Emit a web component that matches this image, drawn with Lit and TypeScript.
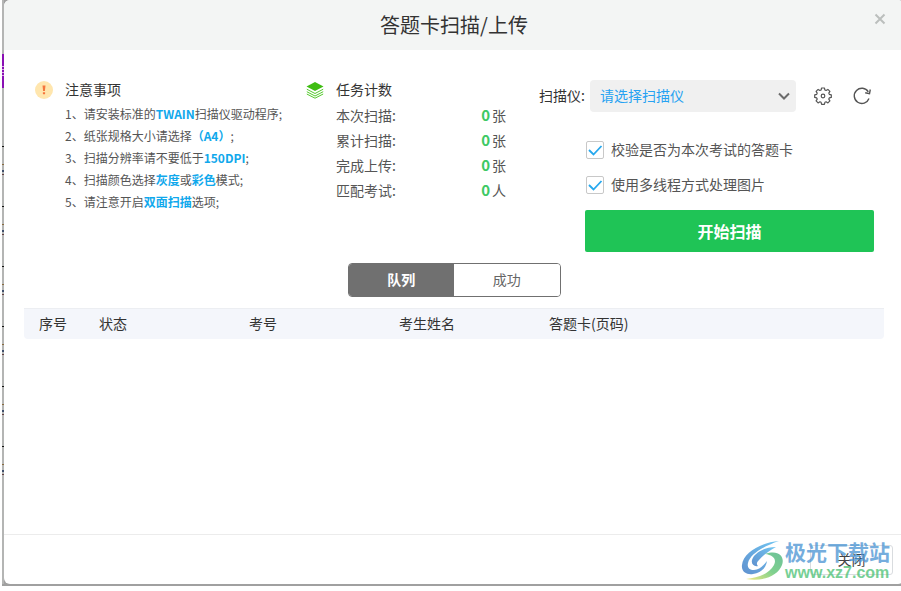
import { LitElement, html, css } from "lit";
import { customElement, state } from "lit/decorators.js";

@customElement("app-root")
export class AppRoot extends LitElement {
  @state() private tab = "queue";

  private counts = [
    { label: "本次扫描", value: 0, unit: "张" },
    { label: "累计扫描", value: 0, unit: "张" },
    { label: "完成上传", value: 0, unit: "张" },
    { label: "匹配考试", value: 0, unit: "人" },
  ];

  private options = ["校验是否为本次考试的答题卡", "使用多线程方式处理图片"];

  static styles = css`
    :host {
      display: block;
      position: relative;
      overflow: hidden;
      box-sizing: border-box;
      min-height: 100vh;
      background: #fff;
      color: #333;
      font: 14px/20px "Noto Sans CJK SC", sans-serif;
    }
    * { box-sizing: border-box; }
    button, input, select { font: inherit; color: inherit; margin: 0; padding: 0; }
    svg { display: block; fill: none; }
    .backdrop {
      display: flex;
      min-height: calc(100vh - 5px);
      padding: 0 0 2px 2px;
      margin-bottom: 5px;
      background: linear-gradient(90deg, #fff 2px, #a0a0a0 2px);
      margin-right: -3px;
    }
    .edge { flex: 0 0 2px; background: #b4b5b4; display: flex; flex-direction: column; }
    .edge-tag { margin-top: 54px; height: 34px; background: #8a10b4; flex: none; padding-top: 12px; }
    .edge-tag i { display: block; height: 12px; background: repeating-linear-gradient(#d9a6e8 0 1px, #8a10b4 1px 3px); }
    .edge-rows { margin-top: 58px; height: 360px; flex: none; background: repeating-linear-gradient(#111 0 1px, #b4b5b4 1px 18px, #8a6a3c 18px 19px, #b4b5b4 19px 24px, #40506c 24px 26px, #b4b5b4 26px 28px, #664040 28px 29px, #b4b5b4 29px 60px); }
    .dialog {
      flex: 1;
      min-width: 0;
      display: flex;
      flex-direction: column;
      background: #fff;
      border-radius: 6px;
      overflow: hidden;
    }
    header {
      display: grid;
      grid-template-columns: 1fr auto 1fr;
      align-items: center;
      height: 50px;
      padding: 0 16px;
      background: #f3f5f4;
    }
    h1 { grid-column: 2; margin: 0; font-size: 20px; line-height: 30px; font-weight: 400; }
    .close-x { justify-self: end; width: 16px; height: 16px; margin-bottom: 12px; border: 0; background: none; stroke: #bbbfbd; stroke-width: 2; }
    main { flex: 1; }
    .top {
      display: grid;
      grid-template-columns: 271fr 233fr 335fr;
      padding: 28px 30px 0 31px;
      min-height: 202px;
    }
    .panel { display: grid; grid-template-columns: 18px 1fr; column-gap: 12px; align-content: start; }
    .panel > svg { margin-top: 3px; }
    h2 { margin: 0 0 3px; font-size: 14px; line-height: 22px; font-weight: 400; }
    .notes { margin: 0; padding: 0; list-style: none; font-size: 12px; line-height: 22px; color: #555; white-space: nowrap; }
    .notes b { color: #10a8ec; }
    .tasks { padding-right: 33px; }
    dl { margin: 0; color: #555; line-height: 24px; }
    .count { display: flex; justify-content: space-between; height: 25px; }
    dd { margin: 0; }
    dd b { color: #3cc964; margin-right: 2px; font-size: 15px; line-height: 16px; }
    .scanner { display: flex; align-items: center; padding-top: 2px; padding-right: 3px; }
    .scanner > label { flex: none; width: 51px; padding-bottom: 2px; white-space: nowrap; }
    .pick { display: grid; flex: 1; min-width: 0; margin-right: 18px; }
    .pick > * { grid-area: 1 / 1; }
    select { appearance: none; width: 100%; height: 32px; border: 0; border-radius: 4px; background: #f0f0f0; color: #26a2f2; padding: 0 0 2px 10px; }
    .pick svg { justify-self: end; align-self: center; margin-right: 6px; stroke: #6b6b6b; stroke-width: 2; pointer-events: none; }
    .icon { width: 18px; height: 18px; border: 0; background: none; stroke: #555; stroke-width: 1.4; }
    .icon + .icon { margin-left: 21px; }
    .setup { padding-left: 46px; }
    .option { display: flex; align-items: center; gap: 7px; height: 35px; padding-left: 1px; color: #555; white-space: nowrap; }
    .option-text { padding-bottom: 2px; }
    .options { padding: 20px 0 8px; }
    .box { display: grid; flex: none; }
    .box > * { grid-area: 1 / 1; }
    .box input { appearance: none; width: 18px; height: 18px; border: 1px solid #c8c8c8; border-radius: 2px; background: #fff; }
    .box svg { visibility: hidden; stroke: #26a8ee; stroke-width: 1.8; pointer-events: none; }
    .box input:checked + svg { visibility: visible; }
    .start { width: 100%; height: 42px; border: 0; border-radius: 2px; background: #1fc456; color: #fff; font-size: 16px; font-weight: 700; }
    .tabs { display: flex; width: 213px; height: 34px; margin: 11px auto; border: 1px solid #707070; border-radius: 4px; overflow: hidden; }
    .tabs button { flex: 1; padding-bottom: 2px; border: 0; background: #fff; color: #666; }
    .tabs button.on { background: #707070; color: #fff; font-weight: 700; }
    .records { margin: 0 20px; }
    table { width: 100%; table-layout: fixed; border-spacing: 0; }
    th { width: 150px; height: 31px; padding: 0 0 2px; background: #f4f6fb; border-top: 1px solid #eceef2; font-weight: 400; text-align: left; }
    th:first-child { width: 75px; padding-left: 15px; border-bottom-left-radius: 4px; }
    th:last-child { width: auto; border-bottom-right-radius: 4px; }
    footer { display: flex; justify-content: flex-end; padding: 10px 11px 9px; border-top: 1px solid #ececec; }
    .close { width: 83px; height: 30px; border: 1px solid #d9dcdf; border-radius: 3px; background: #fff; color: #444; padding-bottom: 2px; }
    .watermark { position: absolute; right: 11px; bottom: 8px; display: flex; pointer-events: none; opacity: 0.76; }
    .brand { display: flex; flex-direction: column; font-size: 21px; line-height: 24px; font-weight: 700; color: #4b94d3; }
    .site { font: 700 16px/20px "Liberation Sans", sans-serif; color: #4cc274; }
  `;

  render() {
    return html`
      <div class="backdrop">
        <div class="edge"><div class="edge-tag"><i></i></div><div class="edge-rows"></div></div>
        <section class="dialog" role="dialog" aria-labelledby="title">
          <header>
            <h1 id="title">答题卡扫描/上传</h1>
            <button class="close-x" aria-label="关闭窗口"><svg width="16" height="16"><path d="M3.5 3.5l9 9M12.5 3.5l-9 9" /></svg></button>
          </header>
          <main>
            <div class="top">
              <section class="panel">
                <svg width="18" height="18"><circle cx="9" cy="9" r="9" fill="#ffe6ae" /><path d="M7.5 4.5h3l-.6 5.5H8.1zM7.9 11.2h2.2v2H7.9z" fill="#f5763d" /></svg>
                <div>
                  <h2>注意事项</h2>
                  <ul class="notes">
                    <li>1、请安装标准的<b>TWAIN</b>扫描仪驱动程序;</li>
                    <li>2、纸张规格大小请选择<b>（A4）</b>;</li>
                    <li>3、扫描分辨率请不要低于<b>150DPI</b>;</li>
                    <li>4、扫描颜色选择<b>灰度</b>或<b>彩色</b>模式;</li>
                    <li>5、请注意开启<b>双面扫描</b>选项;</li>
                  </ul>
                </div>
              </section>
              <section class="panel tasks">
                <svg width="18" height="18"><path d="M9 1l8.5 4.5L9 10 .5 5.500z" fill="#3fbd13" /><path d="M.8 8.200L9 12.500l8.200-4.300M.8 10.700L9 15l8.200-4.300M.8 13L9 17.200 17.200 13" stroke="#55c92e" /></svg>
                <div>
                  <h2>任务计数</h2>
                  <dl>
                    ${this.counts.map((c) => html`<div class="count"><dt>${c.label}:</dt><dd><b>${c.value}</b>${c.unit}</dd></div>`)}
                  </dl>
                </div>
              </section>
              <section>
                <div class="scanner">
                  <label for="scanner">扫描仪:</label>
                  <div class="pick">
                    <select id="scanner"><option>请选择扫描仪</option></select>
                    <svg width="12" height="8"><path d="M1 1.500l5 5 5-5" /></svg>
                  </div>
                  <button class="icon" aria-label="设置"><svg width="18" height="18" viewBox="0 0 18 18"><path stroke-linejoin="round" stroke-width="1.2" d="M7.6 1h2.8l.5 2 1.200.5 1.800-1.100 2 2-1.100 1.700.5 1.300 2 .4v2.600l-2 .5-.5 1.200 1.100 1.800-2 2-1.800-1.100-1.200.5-.5 2H7.600l-.5-2-1.200-.5-1.800 1.100-2-2 1.100-1.800-.5-1.200-2-.5V7.800l2-.4.5-1.300-1.100-1.700 2-2 1.800 1.100 1.200-.5z" /><circle cx="9" cy="9" r="1.800" stroke-width="1.200" /></svg></button>
                  <button class="icon" aria-label="刷新"><svg width="18" height="18"><path d="M15.300 4.800A7.600 7.600 0 1 0 16 11.500M17.300 2.500l-.8 4.200-4.300-.9" /></svg></button>
                </div>
                <div class="setup">
                  <div class="options">
                    ${this.options.map((o) => html`<label class="option"><span class="box"><input type="checkbox" checked /><svg width="18" height="18"><path d="M3 9l4.500 4.500L15.500 5" /></svg></span><span class="option-text">${o}</span></label>`)}
                  </div>
                  <button class="start">开始扫描</button>
                </div>
              </section>
            </div>
            <div class="tabs">
              <button class=${this.tab === "queue" ? "on" : ""} @click=${() => (this.tab = "queue")}>队列</button>
              <button class=${this.tab === "done" ? "on" : ""} @click=${() => (this.tab = "done")}>成功</button>
            </div>
            <div class="records">
              <table>
                <thead><tr><th>序号</th><th>状态</th><th>考号</th><th>考生姓名</th><th>答题卡(页码)</th></tr></thead>
              </table>
            </div>
          </main>
          <footer><button class="close">关闭</button></footer>
        </section>
      </div>
      <div class="watermark">
        <svg width="44" height="44" viewBox="0 0 44 44">
          <defs>
            <linearGradient id="sky" x1="0" y1="1" x2="1" y2="0"><stop offset="0" stop-color="#2e6fc0" /><stop offset="1" stop-color="#45b4ee" /></linearGradient>
            <linearGradient id="leaf" x1="0" y1="1" x2="1" y2="0"><stop offset="0" stop-color="#f0e45a" /><stop offset=".5" stop-color="#58c26b" /><stop offset="1" stop-color="#3fae7a" /></linearGradient>
          </defs>
          <path fill="url(#sky)" d="M38 2C22 3 2 13 1 26c-1 7 5 10 11 9 8-1 13-6 14-13-4 5-8 9-13 9-5 0-7-3-6-7C9 15 23 7 38 2z" />
          <path fill="url(#sky)" d="M35 8c-12 0-22 6-24 13-1 4 2 7 6 6-2-2-1-4 1-6 4-5 10-9 17-13z" />
          <path fill="url(#leaf)" d="M24 15c14-5 20 3 17 11-4 11-20 17-36 14 13-1 24-6 28-14 3-6-1-10-9-11z" />
        </svg>
        <div class="brand"><span>极光下载站</span><span class="site">www.xz7.com</span></div>
      </div>
    `;
  }
}
